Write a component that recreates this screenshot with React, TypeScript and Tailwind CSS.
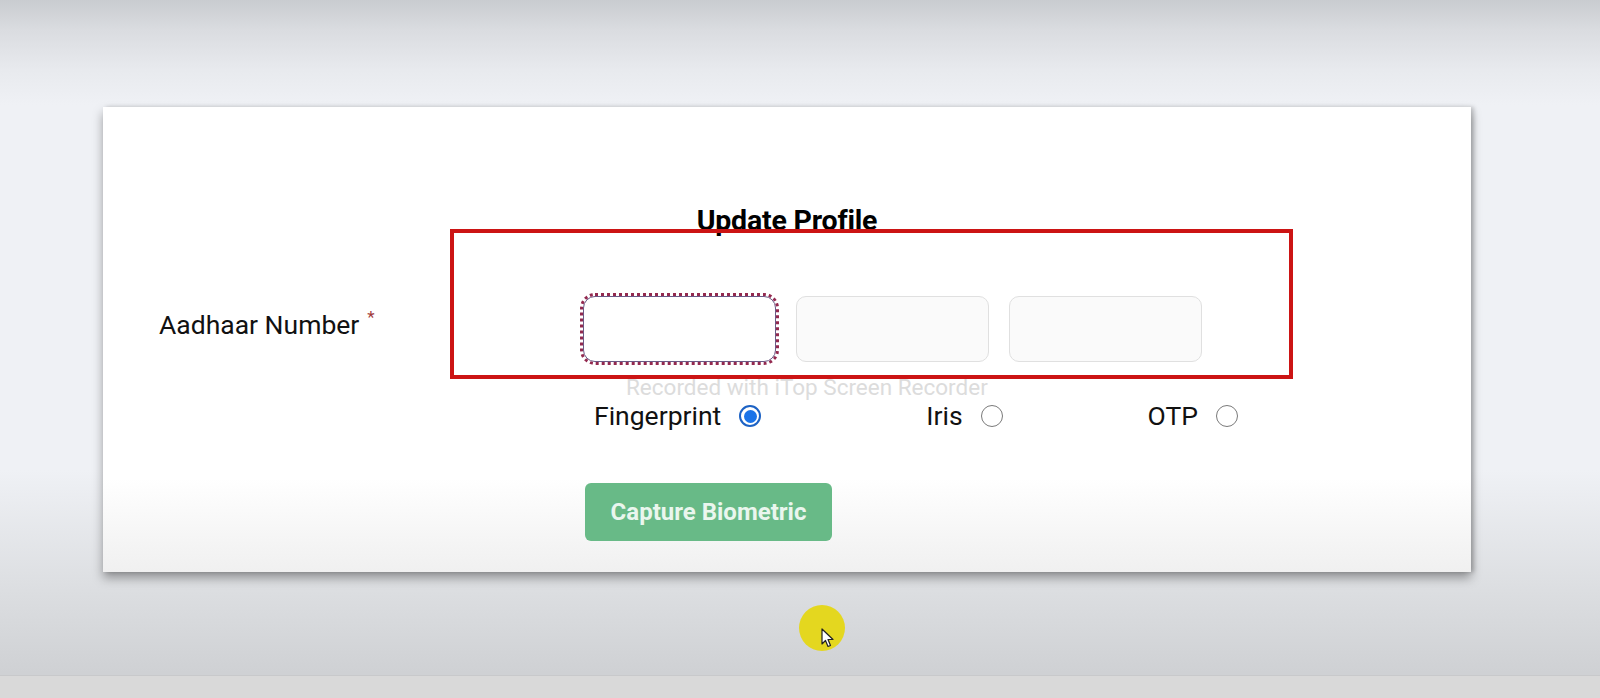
import React from "react";

const Radio = ({ checked }: { checked?: boolean }) =>
  checked ? (
    <span className="flex h-[22px] w-[22px] items-center justify-center rounded-full border-2 border-[#1c62c4] bg-white">
      <span className="h-[13px] w-[13px] rounded-full bg-[#1a73e8]" />
    </span>
  ) : (
    <span className="h-[22px] w-[22px] rounded-full border-[1.5px] border-[#7a7a7a] bg-white" />
  );

const Option = ({ label, checked, className }: { label: string; checked?: boolean; className?: string }) => (
  <div className={"flex items-center gap-[18px] " + (className ?? "")}>
    <span className="text-[26.5px] leading-[32px] text-[#111]">{label}</span>
    <Radio checked={checked} />
  </div>
);

const App = () => {
  return (
    <div className="relative flex h-[698px] w-full flex-col overflow-hidden bg-[linear-gradient(to_bottom,#c9ccd0_0px,#dadce0_30px,#e8eaee_70px,#eff1f5_105px,#eff1f5_470px,#dcdee1_590px,#cfd1d4_672px)] font-['Roboto',sans-serif]">
      <div className="pt-[107px] pl-[103px] pr-[129px]">
        <div className="relative h-[465px] bg-[linear-gradient(to_bottom,#ffffff_0%,#ffffff_80%,#f0f0f0_100%)] shadow-[0_6px_10px_rgba(0,0,0,0.35),3px_0_4px_rgba(0,0,0,0.18)]">
          <div className="pt-[97px] text-center">
            <h1 className="text-[28.5px] font-bold leading-[34px] tracking-[-0.2px] text-black">Update Profile</h1>
          </div>

          <div className="mt-[58px] flex items-center pl-[56px]">
            <label className="mb-[6px] w-[424px] text-[26.5px] leading-[30px] text-[#111]">
              Aadhaar Number
              <span className="relative -top-[11px] ml-[8px] text-[17px] text-[#a23b3b]">*</span>
            </label>
            <div className="flex gap-5">
              <input className="h-[66px] w-[193px] rounded-[12px] border border-[#6a5a86] bg-white outline-3 outline-dotted outline-[#93294f]" />
              <input className="h-[66px] w-[193px] rounded-[10px] border border-[#e0e0e0] bg-[#fafafa]" />
              <input className="h-[66px] w-[193px] rounded-[10px] border border-[#e0e0e0] bg-[#fafafa]" />
            </div>
          </div>

          <div className="mt-[38px] flex items-center pl-[491px]">
            <Option label="Fingerprint" checked />
            <Option label="Iris" className="ml-[165px]" />
            <Option label="OTP" className="ml-[145px]" />
          </div>

          <div className="mt-[51px] pl-[482px]">
            <button className="h-[58px] w-[247px] rounded-[6px] bg-[#68ba87] text-[24px] font-bold text-[#eaf6ee]">
              Capture Biometric
            </button>
          </div>

          {/* annotation drawn over the recording */}
          <div className="pointer-events-none absolute left-[347px] top-[122px] h-[150px] w-[843px] border-[4px] border-[#cc1414]" />
          <div className="pointer-events-none absolute left-[523px] top-[267px] text-[22.5px] leading-[26px] text-[#dcdcdc]">
            Recorded with iTop Screen Recorder
          </div>
        </div>
      </div>

      <div className="flex-1" />
      <div className="h-[23px] border-t border-[#c8c9cb] bg-[#d9d9d9]" />

      {/* cursor highlight */}
      <div className="absolute left-[799px] top-[605px] h-[46px] w-[46px] rounded-full bg-[#e4d71f]" />
      <svg className="absolute left-[821px] top-[628px]" width="14" height="20" viewBox="0 0 14 20">
        <path d="M1 1 L1 16 L4.5 12.5 L7 18.5 L9.5 17.5 L7 11.5 L12 11.5 Z" fill="#fff" stroke="#222" strokeWidth="1.2" strokeLinejoin="round" />
      </svg>
    </div>
  );
};

export default App;
